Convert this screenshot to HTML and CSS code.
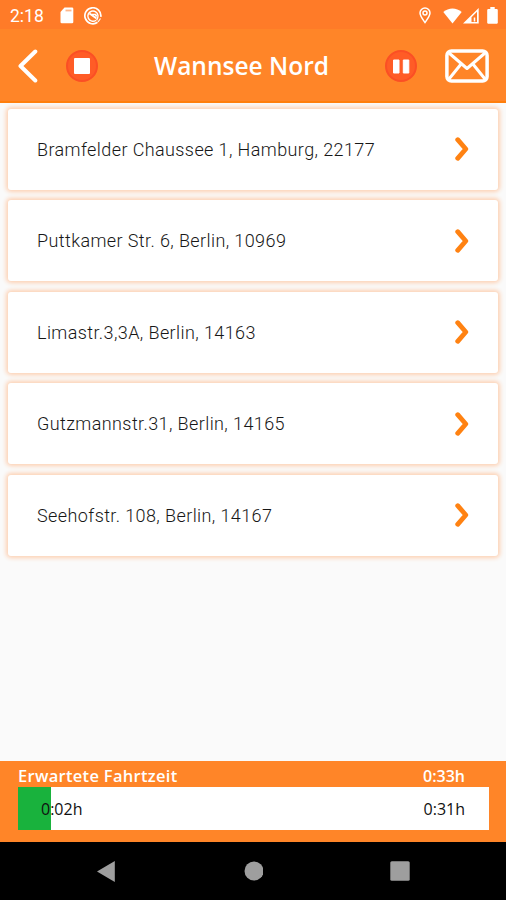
FILE: index.html
```html
<!DOCTYPE html>
<html lang="de">
<head>
<meta charset="utf-8">
<title>Wannsee Nord</title>
<link rel="stylesheet" href="styles.css">
</head>
<body>
<div class="status">
  <span class="clock">2:18</span>
  <svg class="sd" width="14" height="17" viewBox="0 0 14 17"><path d="M4.500 0.500H12a1.300 1.300 0 0 1 1.300 1.300V15a1.300 1.300 0 0 1-1.300 1.300H1.800A1.300 1.300 0 0 1 .5 15V5z" fill="#fff"/><path d="M5.500 3.500h6" stroke="#ffb68a" stroke-width="1.800"/></svg>
  <svg class="sync" width="18" height="18" viewBox="0 0 18 18" fill="none" stroke="#fff"><path d="M13.500 15.300A8 8 0 1 1 16.800 9.800" stroke-width="1.700"/><path d="M12 13.200A5.100 5.100 0 1 1 14 8.500c0 2-.4 3.400-1.400 4.700" stroke-width="1.400"/><path d="M5.500 6.500l7 5M7.500 7.500h4l1.200 2" stroke-width="1.700"/><path d="M16.500 11.500l-2.500 3.500" stroke-width="1.200"/></svg>
  <svg class="pin" width="12" height="17" viewBox="0 0 12 17" fill="none" stroke="#fff" stroke-width="1.500"><path d="M6 15.500C3.500 12 1 8.800 1 6a5 5 0 0 1 10 0c0 2.800-2.500 6-5 9.500z"/><circle cx="6" cy="6" r="2"/></svg>
  <svg class="wifi" width="19" height="16" viewBox="0 0 19 16"><path d="M9.500 15.500L.3 4C5.500-.7 13.500-.7 18.700 4z" fill="#fff"/></svg>
  <svg class="signal" width="16" height="16" viewBox="0 0 16 16"><path fill-rule="evenodd" d="M0 15.500L15.700 0v15.500zM8.500 9.200V14H14V3.800z" fill="#fff"/><path d="M11.500 13.500V9.500" stroke="#fff" stroke-width="1.500"/></svg>
  <svg class="battery" width="11" height="17" viewBox="0 0 11 17"><path d="M3.300 0h4.400v2H10l.8.8V16l-.8.800H1L.2 16V2.800L1 2h2.300z" fill="#fff"/></svg>
</div>
<header class="bar">
  <svg class="back" width="20" height="34" viewBox="0 0 20 34"><path d="M17.300 2.500L2.500 17l14.800 14.500" fill="none" stroke="#fff" stroke-width="4" stroke-linecap="round" stroke-linejoin="round"/></svg>
  <svg class="stop" width="34" height="34" viewBox="0 0 34 34"><circle cx="17" cy="17" r="15" fill="#ff5c26" stroke="#fb4f25" stroke-width="2"/><rect x="9" y="9" width="16" height="16" rx="1" fill="#fff"/></svg>
  <h1>Wannsee Nord</h1>
  <svg class="pause" width="34" height="34" viewBox="0 0 34 34"><circle cx="17" cy="17" r="15" fill="#ff5c26" stroke="#fb4f25" stroke-width="2"/><path d="M9.500 11h5.500v13H9.500zM19.300 11h5.500v13h-5.500z" fill="#fff" stroke="#fff" stroke-linejoin="round"/></svg>
  <svg class="mail" width="44" height="34" viewBox="0 0 44 34" fill="none" stroke="#fff" stroke-linejoin="round"><rect x="1.900" y="1.900" width="40.200" height="30.200" rx="4.500" stroke-width="3.500"/><path d="M4 4l18 15.500L40 4M4 30l12.500-15.500M40 30L27.500 14.500" stroke-width="3"/></svg>
</header>
<main class="list">
  <div class="card"><span>Bramfelder Chaussee 1, Hamburg, 22177</span><svg width="14" height="24" viewBox="0 0 14 24"><path d="M2.700 2.700L10.800 12l-8.100 9.300"/></svg></div>
  <div class="card"><span>Puttkamer Str. 6, Berlin, 10969</span><svg width="14" height="24" viewBox="0 0 14 24"><path d="M2.700 2.700L10.800 12l-8.100 9.300"/></svg></div>
  <div class="card"><span>Limastr.3,3A, Berlin, 14163</span><svg width="14" height="24" viewBox="0 0 14 24"><path d="M2.700 2.700L10.800 12l-8.100 9.300"/></svg></div>
  <div class="card"><span>Gutzmannstr.31, Berlin, 14165</span><svg width="14" height="24" viewBox="0 0 14 24"><path d="M2.700 2.700L10.800 12l-8.100 9.300"/></svg></div>
  <div class="card"><span>Seehofstr. 108, Berlin, 14167</span><svg width="14" height="24" viewBox="0 0 14 24"><path d="M2.700 2.700L10.800 12l-8.100 9.300"/></svg></div>
</main>
<footer class="trip">
  <div class="total"><span class="label">Erwartete Fahrtzeit</span><span>0:33h</span></div>
  <div class="track"><span>0:02h</span><span>0:31h</span></div>
</footer>
<nav class="nav">
  <svg width="18" height="21" viewBox="0 0 18 21"><path d="M17.800 0v21L0 10.500z"/></svg>
  <svg width="20" height="20" viewBox="0 0 20 20"><circle cx="10" cy="10" r="9.500"/></svg>
  <svg width="20" height="20" viewBox="0 0 20 20"><rect x=".3" y=".3" width="19.400" height="19.400" rx="1.500"/></svg>
</nav>
</body>
</html>
```

FILE: styles.css
```css
* { box-sizing: border-box; }
body {
  margin: 0;
  width: 506px;
  height: 900px;
  display: flex;
  flex-direction: column;
  background: #fafafa;
  font-family: Roboto, sans-serif;
  overflow: hidden;
}
svg { display: block; flex: none; }
.status {
  height: 29px;
  flex: none;
  display: flex;
  align-items: center;
  padding: 2px 8px 0 10px;
  background: #ff7b28;
  color: #fff;
}
.clock { width: 50px; font-size: 17.5px; line-height: 20px; }
.sync { margin-left: 10px; }
.pin { margin-left: auto; }
.wifi { margin-left: 12px; }
.signal { margin-left: 1px; }
.battery { margin-left: 8px; }
.bar {
  height: 74px;
  flex: none;
  display: flex;
  align-items: center;
  padding: 2px 17px 0 18px;
  background: #ff8528;
  border-bottom: 2px solid #ff7e0c;
}
.stop { margin-left: 27px; }
.bar h1 {
  flex: 1;
  margin: 0;
  text-align: center;
  color: #fff;
  font: 600 24.500px/34px "Open Sans", sans-serif;
  white-space: nowrap;
}
.mail { margin-left: 27px; }
.list {
  flex: 1;
  display: flex;
  flex-direction: column;
  gap: 10.500px;
  padding: 5.500px 8px 0;
}
.card {
  height: 81px;
  flex: none;
  display: flex;
  align-items: center;
  justify-content: space-between;
  padding: 0 29px;
  background: #fff;
  border-radius: 3px;
  box-shadow: 0 0 4px 2px #fdd0b2;
  color: #171717;
  font-size: 18px;
  font-weight: 300;
  letter-spacing: .4px;
}
.card path {
  fill: none;
  stroke: #ff8212;
  stroke-width: 4.800;
  stroke-linecap: round;
  stroke-linejoin: round;
}
.trip {
  height: 81px;
  flex: none;
  padding: 3px 17px 0 18px;
  background: #ff8528;
  font-family: "Open Sans", sans-serif;
  font-size: 16px;
}
.total {
  display: flex;
  justify-content: space-between;
  height: 23px;
  padding-right: 24px;
  line-height: 24px;
  color: #fff;
  font-weight: 600;
}
.label { font-size: 16.500px; letter-spacing: .3px; }
.track {
  height: 43px;
  display: flex;
  align-items: center;
  justify-content: space-between;
  padding: 0 24px 0 23px;
  color: #111;
  background: linear-gradient(to right, #19b23d 33px, #fff 33px);
}
.nav {
  height: 58px;
  flex: none;
  display: flex;
  align-items: center;
  justify-content: space-between;
  padding: 0 96px 0 97px;
  background: #000;
  fill: #9e9e9e;
}
.nav circle { transform: translateX(1px); }
```
